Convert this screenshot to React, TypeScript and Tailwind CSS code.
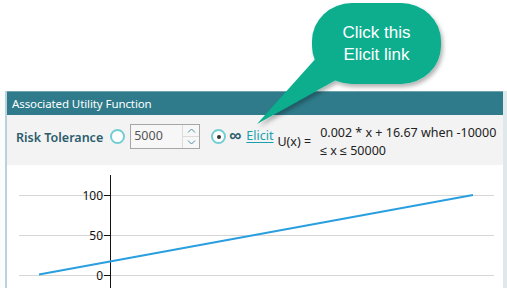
export default function App() {
  return (
    <div className="relative w-[507px] h-[288px] overflow-hidden bg-white font-['Noto_Sans',sans-serif]">
      <div className="h-[91px]" />
      <div className="flex h-[197px]">
        <div className="w-[5px] bg-[#fbfcfc]" />
        <div className="flex w-[498px] flex-col border-l-2 border-[#b9d2dc]">
          {/* header */}
          <div className="flex h-[24px] items-center border-t border-[#6fa3ae] bg-[#2f7b8b] pl-[5px] text-[11.5px] tracking-[-0.1px] text-white">
            Associated Utility Function
          </div>
          {/* controls row */}
          <div className="flex h-[50px] items-start bg-[#f3f3f3] pt-[9px] text-[12.5px]">
            <span className="ml-[9px] mt-[5px] font-semibold text-[#2c5d6c]">Risk Tolerance</span>
            <span className="ml-[7px] mt-[5px] h-[15px] w-[15px] rounded-full border-2 border-[#74cdd3] bg-white" />
            <div className="ml-[5px] flex h-[25px] w-[70px] items-center border border-[#a6a6a6] bg-[#f7f7f7]">
              <span className="pl-[3px] text-[12.5px] text-[#555]">5000</span>
              <div className="ml-auto flex h-full w-[17px] flex-col border-l border-[#dcdcdc]">
                <div className="flex flex-1 items-center justify-center border-b border-[#dcdcdc]">
                  <svg width="9" height="5" viewBox="0 0 9 5"><path d="M1 4.5L4.5 1L8 4.5" fill="none" stroke="#4a8fa0" strokeWidth="1" /></svg>
                </div>
                <div className="flex flex-1 items-center justify-center">
                  <svg width="9" height="5" viewBox="0 0 9 5"><path d="M1 0.5L4.5 4L8 0.5" fill="none" stroke="#4a8fa0" strokeWidth="1" /></svg>
                </div>
              </div>
            </div>
            <span className="ml-[11px] mt-[5px] flex h-[15px] w-[15px] items-center justify-center rounded-full border-2 border-[#74cdd3] bg-white">
              <span className="h-[4px] w-[4px] rounded-full bg-[#333]" />
            </span>
            <span className="ml-[3px] mt-[1px] text-[17px] font-bold leading-[20px] text-[#2c5d6c]">∞</span>
            <span className="ml-[5px] mt-[3px] text-[#1a9fae] underline underline-offset-2">Elicit</span>
            <span className="ml-[4px] mt-[9px] text-[#222]">U(x) =</span>
            <span className="ml-[9px] mt-[0px] w-[180px] leading-[18px] text-[#222]">0.002 * x + 16.67 when -10000 ≤ x ≤ 50000</span>
          </div>
          {/* chart */}
          <div className="flex-1 bg-white">
            <svg width="496" height="123" viewBox="7 165 496 123">
              <line x1="19" y1="195.5" x2="494" y2="195.5" stroke="#d6d6d6" />
              <line x1="19" y1="235.5" x2="494" y2="235.5" stroke="#d6d6d6" />
              <line x1="19" y1="275.5" x2="494" y2="275.5" stroke="#d6d6d6" />
              <line x1="110.5" y1="175" x2="110.5" y2="288" stroke="#111" />
              <line x1="104" y1="195.5" x2="110" y2="195.5" stroke="#111" />
              <line x1="104" y1="235.5" x2="110" y2="235.5" stroke="#111" />
              <line x1="104" y1="275.5" x2="110" y2="275.5" stroke="#111" />
              <text x="103" y="200" textAnchor="end" fontSize="12" fill="#111" fontFamily="Noto Sans, sans-serif">100</text>
              <text x="103" y="240" textAnchor="end" fontSize="12" fill="#111" fontFamily="Noto Sans, sans-serif">50</text>
              <text x="103" y="280" textAnchor="end" fontSize="12" fill="#111" fontFamily="Noto Sans, sans-serif">0</text>
              <line x1="39" y1="274.5" x2="473" y2="195" stroke="#2a9fe0" strokeWidth="2" />
            </svg>
          </div>
        </div>
        <div className="flex-1 bg-[#dfe8ea]" />
      </div>

      {/* callout */}
      <svg className="absolute left-0 top-0" width="507" height="140" viewBox="0 0 507 140">
        <defs>
          <filter id="sh" x="-20%" y="-20%" width="140%" height="150%">
            <feDropShadow dx="2" dy="3" stdDeviation="2" floodColor="#000" floodOpacity="0.3" />
          </filter>
        </defs>
        <g filter="url(#sh)" fill="#08ae8e">
          <path d="M318 56 L257 124 L336 80 Z" />
          <rect x="312" y="3" width="129" height="81" rx="40" ry="38" />
        </g>
      </svg>
      <div className="absolute left-[312px] top-[22px] w-[129px] text-center font-['Liberation_Sans',sans-serif] text-[17px] leading-[22px] text-white">
        Click this<br />Elicit link
      </div>
    </div>
  );
}
